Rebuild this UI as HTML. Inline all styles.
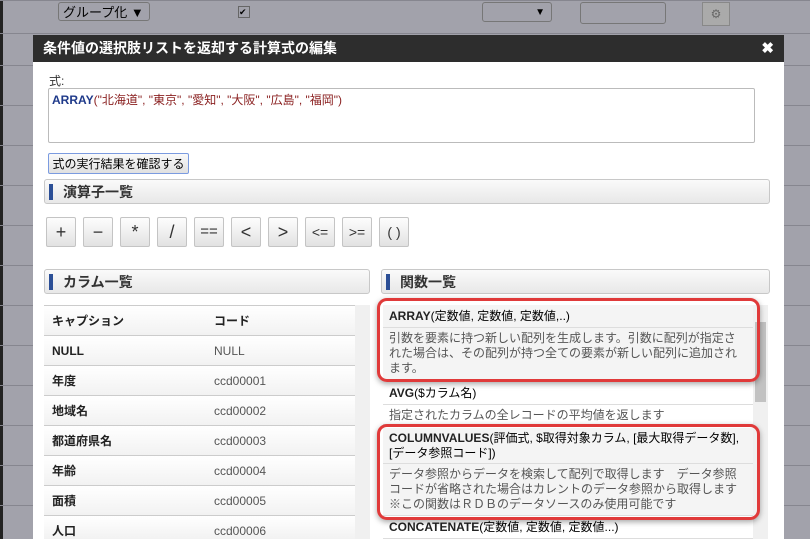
<!DOCTYPE html><html style="width:810px;height:539px;overflow:hidden"><head><meta charset="utf-8"><style>
body{margin:0;width:810px;height:539px;overflow:hidden;background:#a2a2ab;font-family:"Liberation Sans","Noto Sans CJK JP",sans-serif;position:relative}
.abs{position:absolute}
.bgl{position:absolute;left:0;width:810px;height:1px;background:#86868f}
.dlg{left:33px;top:35px;width:751px;height:504px;background:#fff}
.tb{left:33px;top:35px;width:751px;height:27px;background:#2d2d2d;color:#fff;font-size:14px;font-weight:bold;line-height:27px}
.sh{position:absolute;height:25px;border:1px solid #c8c8c8;border-radius:3px;background:linear-gradient(#fafafa,#e8e8e8);font-size:14px;font-weight:bold;color:#333;line-height:25px;box-sizing:border-box}
.sh:before{content:"";position:absolute;left:4px;top:4px;width:4px;height:16px;background:#2c4f96}
.op{position:absolute;top:217px;width:30px;height:30px;border:1px solid #c4c4c4;border-radius:2px;background:linear-gradient(#fdfdfd,#e2e2e2);box-sizing:border-box;text-align:center;line-height:28px;font-size:18px;color:#333}
.row{position:absolute;left:44px;width:311px;height:30px;border-top:1px solid #ccc;background:linear-gradient(#fff,#f2f2f2);font-size:12px;line-height:30px;box-sizing:border-box}
.row b{position:absolute;left:8px;color:#222}
.row span{position:absolute;left:170px;color:#555}
.fn{position:absolute;left:383px;width:370px;font-size:12px;box-sizing:border-box;padding:0 6px;background:#f4f4f4;border-bottom:1px solid #ddd;overflow:hidden}
.fn b{color:#222}
.fn.d{color:#555;line-height:15px;padding-top:3px}
.red{position:absolute;border:3px solid #e03a3a;border-radius:10px;box-shadow:0 2px 6px rgba(0,0,0,.35)}
</style></head><body>
<div class="abs" style="left:0;top:0;width:3px;height:539px;background:#222"></div>
<div class="bgl" style="top:0"></div><div class="bgl" style="top:33px"></div>
<div class="abs" style="left:58px;top:2px;width:92px;height:19px;border:1px solid #777;border-radius:3px;font-size:13px;line-height:19px;padding-left:4px;box-sizing:border-box">グループ化 ▼</div>
<div class="abs" style="left:238px;top:6px;width:10px;height:10px;border:1px solid #666;font-size:9px;line-height:10px">✔</div>
<div class="abs" style="left:482px;top:2px;width:70px;height:20px;border:1px solid #777;border-radius:3px;font-size:10px;line-height:20px;text-align:right;padding-right:6px;box-sizing:border-box">▼</div>
<div class="abs" style="left:580px;top:2px;width:84px;height:20px;border:1px solid #777;border-radius:3px"></div>
<div class="abs" style="left:702px;top:2px;width:26px;height:22px;border:1px solid #888;background:#aaa;font-size:12px;text-align:center;line-height:22px;color:#666">⚙</div>
<div class="bgl" style="top:65px"></div><div class="bgl" style="top:105px"></div><div class="bgl" style="top:145px"></div><div class="bgl" style="top:185px"></div><div class="bgl" style="top:225px"></div><div class="bgl" style="top:265px"></div><div class="bgl" style="top:305px"></div><div class="bgl" style="top:345px"></div><div class="bgl" style="top:385px"></div><div class="bgl" style="top:425px"></div><div class="bgl" style="top:465px"></div><div class="bgl" style="top:505px"></div>
<div class="abs dlg"></div>
<div class="abs tb"><span style="margin-left:10px">条件値の選択肢リストを返却する計算式の編集</span><span style="position:absolute;right:10px;font-size:15px">✖</span></div>
<div class="abs" style="left:49px;top:72px;font-size:12px;color:#333">式:</div>
<div class="abs" style="left:48px;top:88px;width:707px;height:55px;border:1px solid #bbb;border-radius:2px;font-size:12px;padding:2px 3px;box-sizing:border-box"><b style="color:#1f3a8a">ARRAY</b><span style="color:#8b2222">("北海道", "東京", "愛知", "大阪", "広島", "福岡")</span></div>
<div class="abs" style="left:48px;top:153px;width:141px;height:21px;border:1px solid #7b9be0;border-radius:2px;background:linear-gradient(#fafafa,#e0e0e0);font-size:12px;line-height:20px;text-align:center;box-sizing:border-box">式の実行結果を確認する</div>
<div class="sh" style="left:44px;top:179px;width:726px;padding-left:18px">演算子一覧</div>
<div class="op" style="left:46px">+</div><div class="op" style="left:83px">−</div><div class="op" style="left:120px">*</div><div class="op" style="left:157px">/</div><div class="op" style="left:194px;font-size:15px">==</div><div class="op" style="left:231px">&lt;</div><div class="op" style="left:268px">&gt;</div><div class="op" style="left:305px;font-size:14px">&lt;=</div><div class="op" style="left:342px;font-size:14px">&gt;=</div><div class="op" style="left:379px;font-size:14px">( )</div>
<div class="sh" style="left:44px;top:269px;width:326px;padding-left:18px">カラム一覧</div>
<div class="sh" style="left:381px;top:269px;width:389px;padding-left:18px">関数一覧</div>
<div class="abs" style="left:355px;top:305px;width:15px;height:234px;background:#f0f0f0"></div>
<div class="row" style="top:305px"><b>キャプション</b><span style="color:#222;font-weight:bold">コード</span></div>
<div class="row" style="top:335px"><b>NULL</b><span>NULL</span></div>
<div class="row" style="top:365px"><b>年度</b><span>ccd00001</span></div>
<div class="row" style="top:395px"><b>地域名</b><span>ccd00002</span></div>
<div class="row" style="top:425px"><b>都道府県名</b><span>ccd00003</span></div>
<div class="row" style="top:455px"><b>年齢</b><span>ccd00004</span></div>
<div class="row" style="top:485px"><b>面積</b><span>ccd00005</span></div>
<div class="row" style="top:515px;height:24px"><b>人口</b><span>ccd00006</span></div>
<div class="abs" style="left:753px;top:305px;width:15px;height:234px;background:#f0f0f0"></div>
<div class="abs" style="left:755px;top:322px;width:11px;height:80px;background:#c2c2c2"></div>
<div class="fn" style="top:305px;height:23px;line-height:23px"><b>ARRAY</b>(定数値, 定数値, 定数値,..)</div>
<div class="fn d" style="top:328px;height:53px">引数を要素に持つ新しい配列を生成します。引数に配列が指定された場合は、その配列が持つ全ての要素が新しい配列に追加されます。</div>
<div class="fn" style="top:381px;height:24px;line-height:24px;background:#fff"><b>AVG</b>($カラム名)</div>
<div class="fn d" style="top:405px;height:20px;background:#fff">指定されたカラムの全レコードの平均値を返します</div>
<div class="fn" style="top:428px;height:36px;line-height:15px;padding-top:3px"><b>COLUMNVALUES</b>(評価式, $取得対象カラム, [最大取得データ数], [データ参照コード])</div>
<div class="fn d" style="top:464px;height:52px">データ参照からデータを検索して配列で取得します　データ参照コードが省略された場合はカレントのデータ参照から取得します※この関数はＲＤＢのデータソースのみ使用可能です</div>
<div class="fn" style="top:516px;height:23px;line-height:23px;background:#fff"><b>CONCATENATE</b>(定数値, 定数値, 定数値...)</div>
<div class="red" style="left:377px;top:298px;width:377px;height:78px"></div>
<div class="red" style="left:377px;top:424px;width:377px;height:90px"></div>
</body></html>
